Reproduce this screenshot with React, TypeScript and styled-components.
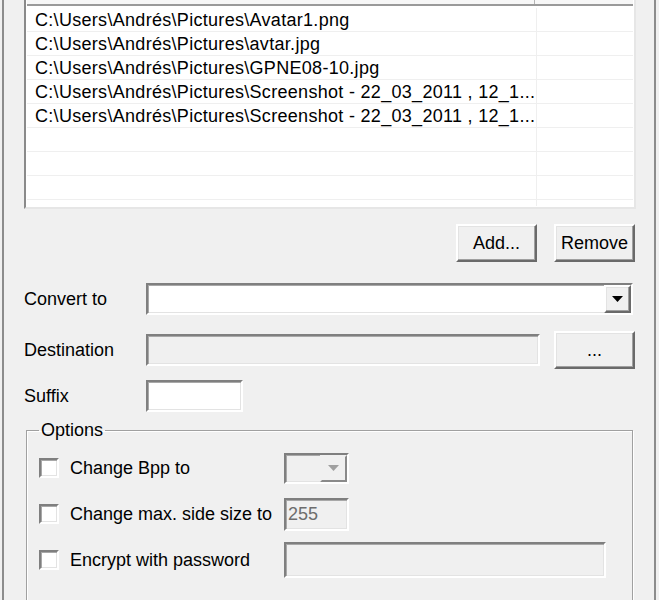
import styled, { createGlobalStyle, css } from 'styled-components';

const GlobalStyle = createGlobalStyle`
  html, body {
    margin: 0;
    padding: 0;
    background: #f0f0f0;
    overflow: hidden;
  }
  body {
    font-family: "Liberation Sans", Arial, sans-serif;
    font-size: 18px;
    color: #000;
  }
`;

const sunken = css`
  box-sizing: border-box;
  border: 2px solid;
  border-color: #7f7f7f #ffffff #ffffff #7f7f7f;
  box-shadow: inset 1px 1px 0 #a8a8a8, inset -1px -1px 0 #e3e3e3;
`;

const raised = css`
  box-sizing: border-box;
  border: 2px solid;
  border-color: #ffffff #6a6a6a #6a6a6a #ffffff;
  box-shadow: inset -1px -1px 0 #a0a0a0, inset 1px 1px 0 #e3e3e3;
  background: #f0f0f0;
`;

const Frame = styled.div`
  box-sizing: border-box;
  width: 654px;
  height: 600px;
  margin-left: 2px;
  border-left: 2px solid #8c8c8c;
  border-right: 2px solid #8c8c8c;
  padding-left: 20px;
  overflow: hidden;
`;

const ListView = styled.div`
  ${sunken};
  box-shadow: none;
  border-color: #8a8a8a #e6e6e6 #e6e6e6 #8a8a8a;
  width: 612px;
  height: 231px;
  margin-top: -22px;
  padding: 1px;
  background: #fff;
  display: flex;
  flex-direction: column;
`;

const Header = styled.div`
  flex: none;
  display: grid;
  grid-template-columns: 508px 1fr;
  height: 25px;
  box-sizing: border-box;
  background: #f7f7f7;
  border-bottom: 2px solid #9a9a9a;
`;

const HeaderCell = styled.div`
  border-right: 1px solid #b5b5b5;
`;

const ListBody = styled.div`
  flex: 1;
  overflow: hidden;
  padding-top: 2px;
`;

const Row = styled.div`
  display: grid;
  grid-template-columns: 509px 1fr;
  height: 24px;
  box-sizing: border-box;
  border-bottom: 1px solid #efefef;
`;

const PathCell = styled.div`
  padding-left: 8px;
  line-height: 24px;
  letter-spacing: 0.3px;
  white-space: nowrap;
  overflow: hidden;
`;

const EmptyCell = styled.div`
  border-left: 1px solid #efefef;
`;

const ButtonRow = styled.div`
  display: flex;
  justify-content: flex-end;
  gap: 17px;
  width: 611px;
  margin-top: 15px;
`;

const Button = styled.button`
  ${raised};
  width: 81px;
  height: 38px;
  padding: 0;
  font: inherit;
  color: #000;
  flex: none;
`;

const FieldRow = styled.div<{ $top: number }>`
  display: flex;
  align-items: center;
  margin-top: ${({ $top }) => $top}px;
`;

const Label = styled.label`
  width: 122px;
  flex: none;
`;

const Field = styled.div<{ $w: number; $h: number; $disabled?: boolean }>`
  ${sunken};
  width: ${({ $w }) => $w}px;
  height: ${({ $h }) => $h}px;
  flex: none;
  background: ${({ $disabled }) => ($disabled ? '#f0f0f0' : '#ffffff')};
  color: ${({ $disabled }) => ($disabled ? '#6d6d6d' : '#000')};
  padding-left: 2px;
  display: flex;
  align-items: center;
`;

const Combo = styled(Field)`
  padding: 0;
  justify-content: flex-end;
  align-items: stretch;
`;

const DropButton = styled.span<{ $disabled?: boolean }>`
  ${raised};
  width: 27px;
  display: flex;
  align-items: center;
  justify-content: center;
  ${({ $disabled }) =>
    $disabled &&
    css`
      border-color: #f0f0f0 #8a8a8a #8a8a8a #f0f0f0;
      box-shadow: none;
    `}
`;

const Group = styled.fieldset`
  box-sizing: border-box;
  width: 607px;
  height: 220px;
  margin: 7px 0 0 2px;
  padding: 4px 0 0 12px;
  min-width: 0;
  border: 1px solid #a0a0a0;
  box-shadow: inset 1px 1px 0 #ffffff, 1px 1px 0 #ffffff;
`;

const Legend = styled.legend`
  padding: 0 2px;
  line-height: 22px;
`;

const OptionRow = styled.div`
  display: flex;
  align-items: center;
  height: 46px;
`;

const CheckBox = styled.span`
  ${sunken};
  width: 20px;
  height: 20px;
  flex: none;
  background: #fff;
`;

const OptionLabel = styled.span`
  width: 214px;
  margin-left: 11px;
  flex: none;
  white-space: nowrap;
`;

const Arrow = ({ color }: { color: string }) => (
  <svg width="11" height="6" viewBox="0 0 11 6">
    <polygon points="0,0 11,0 5.5,6" fill={color} />
  </svg>
);

const files = [
  'C:\\Users\\Andrés\\Pictures\\Avatar1.png',
  'C:\\Users\\Andrés\\Pictures\\avtar.jpg',
  'C:\\Users\\Andrés\\Pictures\\GPNE08-10.jpg',
  'C:\\Users\\Andrés\\Pictures\\Screenshot - 22_03_2011 , 12_1...',
  'C:\\Users\\Andrés\\Pictures\\Screenshot - 22_03_2011 , 12_1...',
  '',
  '',
  '',
  '',
];

const App = () => {
  return (
    <>
      <GlobalStyle />
      <Frame>
        <ListView>
          <Header>
            <HeaderCell />
            <div />
          </Header>
          <ListBody>
            {files.map((f, i) => (
              <Row key={i}>
                <PathCell>{f}</PathCell>
                <EmptyCell />
              </Row>
            ))}
          </ListBody>
        </ListView>

        <ButtonRow>
          <Button>Add...</Button>
          <Button>Remove</Button>
        </ButtonRow>

        <FieldRow $top={21}>
          <Label>Convert to</Label>
          <Combo $w={487} $h={32}>
            <DropButton>
              <Arrow color="#000" />
            </DropButton>
          </Combo>
        </FieldRow>

        <FieldRow $top={16}>
          <Label>Destination</Label>
          <Field $w={394} $h={32} $disabled />
          <Button style={{ marginLeft: 14 }}>...</Button>
        </FieldRow>

        <FieldRow $top={11}>
          <Label>Suffix</Label>
          <Field $w={97} $h={32} />
        </FieldRow>

        <Group>
          <Legend>Options</Legend>
          <OptionRow>
            <CheckBox />
            <OptionLabel>Change Bpp to</OptionLabel>
            <Combo $w={65} $h={31} $disabled>
              <DropButton $disabled>
                <Arrow color="#a0a0a0" />
              </DropButton>
            </Combo>
          </OptionRow>
          <OptionRow>
            <CheckBox />
            <OptionLabel>Change max. side size to</OptionLabel>
            <Field $w={65} $h={33} $disabled>
              255
            </Field>
          </OptionRow>
          <OptionRow>
            <CheckBox />
            <OptionLabel>Encrypt with password</OptionLabel>
            <Field $w={322} $h={36} $disabled />
          </OptionRow>
        </Group>
      </Frame>
    </>
  );
};

export default App;
